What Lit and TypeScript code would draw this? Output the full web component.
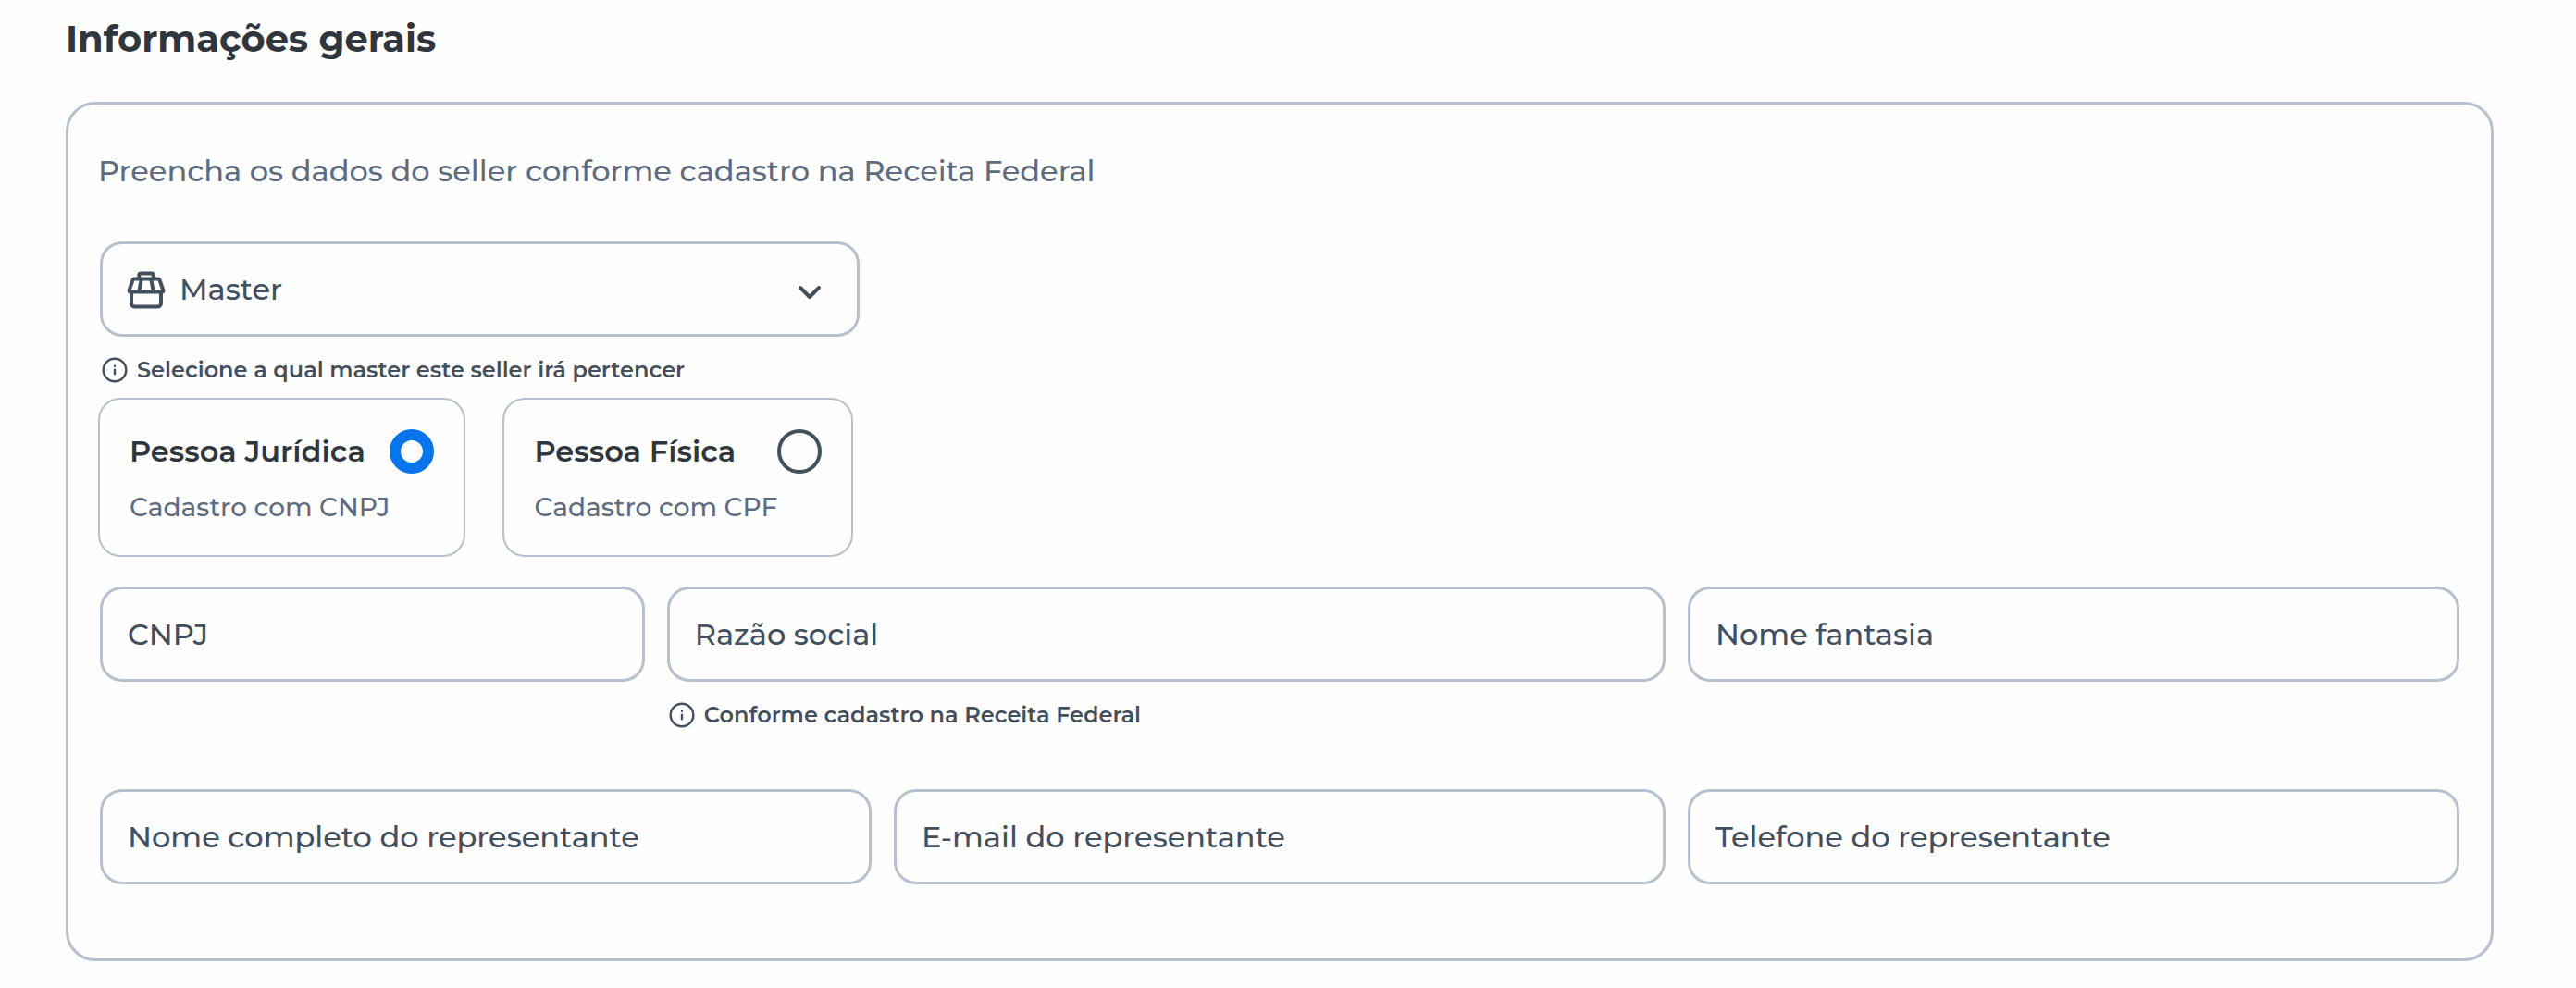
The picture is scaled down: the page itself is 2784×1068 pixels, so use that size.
import { LitElement, html, css, nothing } from "lit";
import { customElement, property } from "lit/decorators.js";

const storeIcon = html`<svg class="store" viewBox="0 0 48 48" aria-hidden="true">
  <path d="M17.300 11V8.500A2 2 0 0 1 19.300 6.500H30.700A2 2 0 0 1 32.700 8.500V11" />
  <path d="M12.300 12.500H37.700A2 2 0 0 1 39.600 13.900L43.400 25A1.200 1.200 0 0 1 42.200 26.600H7.800A1.200 1.200 0 0 1 6.600 25L10.400 13.900A2 2 0 0 1 12.300 12.500Z" />
  <path d="M19.700 13L17.300 26M30.300 13L32.700 26" />
  <path d="M9 27V39A3.500 3.500 0 0 0 12.500 42.500H37.500A3.500 3.500 0 0 0 41 39V27" />
</svg>`;

const infoIcon = html`<svg class="info" viewBox="0 0 28 28" aria-hidden="true">
  <circle cx="14" cy="14" r="12.300" />
  <path d="M14 13.700V18.200M14 9.700V9.800" />
</svg>`;

const controlStyles = css`
  :host {
    display: block;
    color: #444f5d;
  }
  * {
    box-sizing: border-box;
  }
  .hint {
    display: flex;
    align-items: center;
    gap: 10px;
    margin: 20px 0 0 2px;
    font-size: 24px;
    line-height: 32px;
    font-weight: 600;
  }
  .info {
    width: 28px;
    height: 28px;
    flex: none;
    fill: none;
    stroke: currentColor;
    stroke-width: 2.4;
    stroke-linecap: round;
  }
`;

@customElement("text-field")
class TextField extends LitElement {
  @property() label = "";
  @property() type = "text";
  @property() hint = "";

  static styles = [
    controlStyles,
    css`
      .box {
        display: block;
        width: 100%;
        height: 103px;
        padding: 0 27px;
        border: 3px solid #b6c0ce;
        border-radius: 24px;
        background: transparent;
        color: inherit;
        font: inherit;
        font-size: 32px;
        font-weight: 500;
      }
      .box::placeholder {
        color: inherit;
        opacity: 1;
      }
    `,
  ];

  render() {
    return html`
      <input class="box" type=${this.type} placeholder=${this.label} aria-label=${this.label} />
      ${this.hint ? html`<div class="hint">${infoIcon}<span>${this.hint}</span></div>` : nothing}
    `;
  }
}

@customElement("master-select")
class MasterSelect extends LitElement {
  static styles = [
    controlStyles,
    css`
      .field {
        display: grid;
        grid-template-columns: 84px 1fr 84px;
        align-items: center;
      }
      .box {
        grid-area: 1 / 1 / 2 / 4;
        width: 100%;
        height: 103px;
        padding: 0 83px;
        border: 3px solid #b6c0ce;
        border-radius: 24px;
        background: transparent;
        color: inherit;
        font: inherit;
        font-size: 32px;
        font-weight: 500;
        appearance: none;
      }
      .store,
      .chevron {
        width: 48px;
        height: 48px;
        pointer-events: none;
        fill: none;
        stroke: currentColor;
        stroke-width: 4;
        stroke-linecap: round;
        stroke-linejoin: round;
      }
      .store {
        grid-area: 1 / 1;
        margin-left: 25px;
      }
      .chevron {
        grid-area: 1 / 3;
        margin-left: 6px;
      }
    `,
  ];

  render() {
    return html`
      <div class="field">
        <select class="box" aria-label="Master">
          <option>Master</option>
        </select>
        ${storeIcon}
        <svg class="chevron" viewBox="0 0 48 48" aria-hidden="true">
          <path d="M14 22L24 32L34 22" />
        </svg>
      </div>
      <div class="hint">${infoIcon}<span>Selecione a qual master este seller irá pertencer</span></div>
    `;
  }
}

@customElement("app-root")
class AppRoot extends LitElement {
  static styles = css`
    :host {
      display: block;
      min-height: 100vh;
      background: #fefefe;
      color: #2f363e;
      font-family: Montserrat, Inter, sans-serif;
      font-size: 32px;
    }
    * {
      box-sizing: border-box;
    }
    .page {
      padding: 18px 89px 29px 71px;
    }
    .title {
      margin: 0 0 44px;
      font-size: 40px;
      line-height: 48px;
      font-weight: 700;
    }
    .panel {
      padding: 48px 34px 80px;
      border: 3px solid #b6c0ce;
      border-radius: 32px;
    }
    .intro {
      margin: 0 -2px 52px;
      color: #5f6c80;
      line-height: 48px;
      font-weight: 500;
    }
    .master {
      width: 32.2%;
    }
    .kinds {
      display: flex;
      gap: 40px;
      margin: 14px -2px 32px;
      padding: 0;
      border: 0;
    }
    .kind {
      display: flex;
      align-items: flex-start;
      padding: 32px 32px 24px;
      border: 2px solid #b6c0ce;
      border-radius: 24px;
    }
    .text {
      display: flex;
      flex-direction: column;
      gap: 8px;
    }
    .name {
      line-height: 48px;
      font-weight: 600;
    }
    .detail {
      color: #5f6c80;
      font-size: 28px;
      line-height: 56px;
      font-weight: 500;
    }
    .radio {
      flex: none;
      width: 48px;
      height: 48px;
      margin: 0;
      appearance: none;
      border: 4px solid #444f5d;
      border-radius: 50%;
    }
    .radio:checked {
      border: 12px solid #0674eb;
    }
    .grid {
      display: grid;
      grid-template-columns: repeat(21, 1fr);
      column-gap: 24px;
      row-gap: 64px;
    }
    .c5 {
      grid-column: span 5;
    }
    .c7 {
      grid-column: span 7;
    }
    .c9 {
      grid-column: span 9;
    }
  `;

  render() {
    return html`
      <main class="page">
        <h1 class="title">Informações gerais</h1>
        <form class="panel">
          <p class="intro">Preencha os dados do seller conforme cadastro na Receita Federal</p>
          <master-select class="master"></master-select>
          <fieldset class="kinds" aria-label="Tipo de pessoa">
            <label class="kind">
              <span class="text">
                <span class="name">Pessoa Jurídica</span>
                <span class="detail">Cadastro com CNPJ</span>
              </span>
              <input class="radio" type="radio" name="kind" checked />
            </label>
            <label class="kind">
              <span class="text">
                <span class="name">Pessoa Física</span>
                <span class="detail">Cadastro com CPF</span>
              </span>
              <input class="radio" type="radio" name="kind" />
            </label>
          </fieldset>
          <div class="grid">
            <text-field class="c5" label="CNPJ"></text-field>
            <text-field class="c9" label="Razão social" hint="Conforme cadastro na Receita Federal"></text-field>
            <text-field class="c7" label="Nome fantasia"></text-field>
            <text-field class="c7" label="Nome completo do representante"></text-field>
            <text-field class="c7" label="E-mail do representante" type="email"></text-field>
            <text-field class="c7" label="Telefone do representante" type="tel"></text-field>
          </div>
        </form>
      </main>
    `;
  }
}
